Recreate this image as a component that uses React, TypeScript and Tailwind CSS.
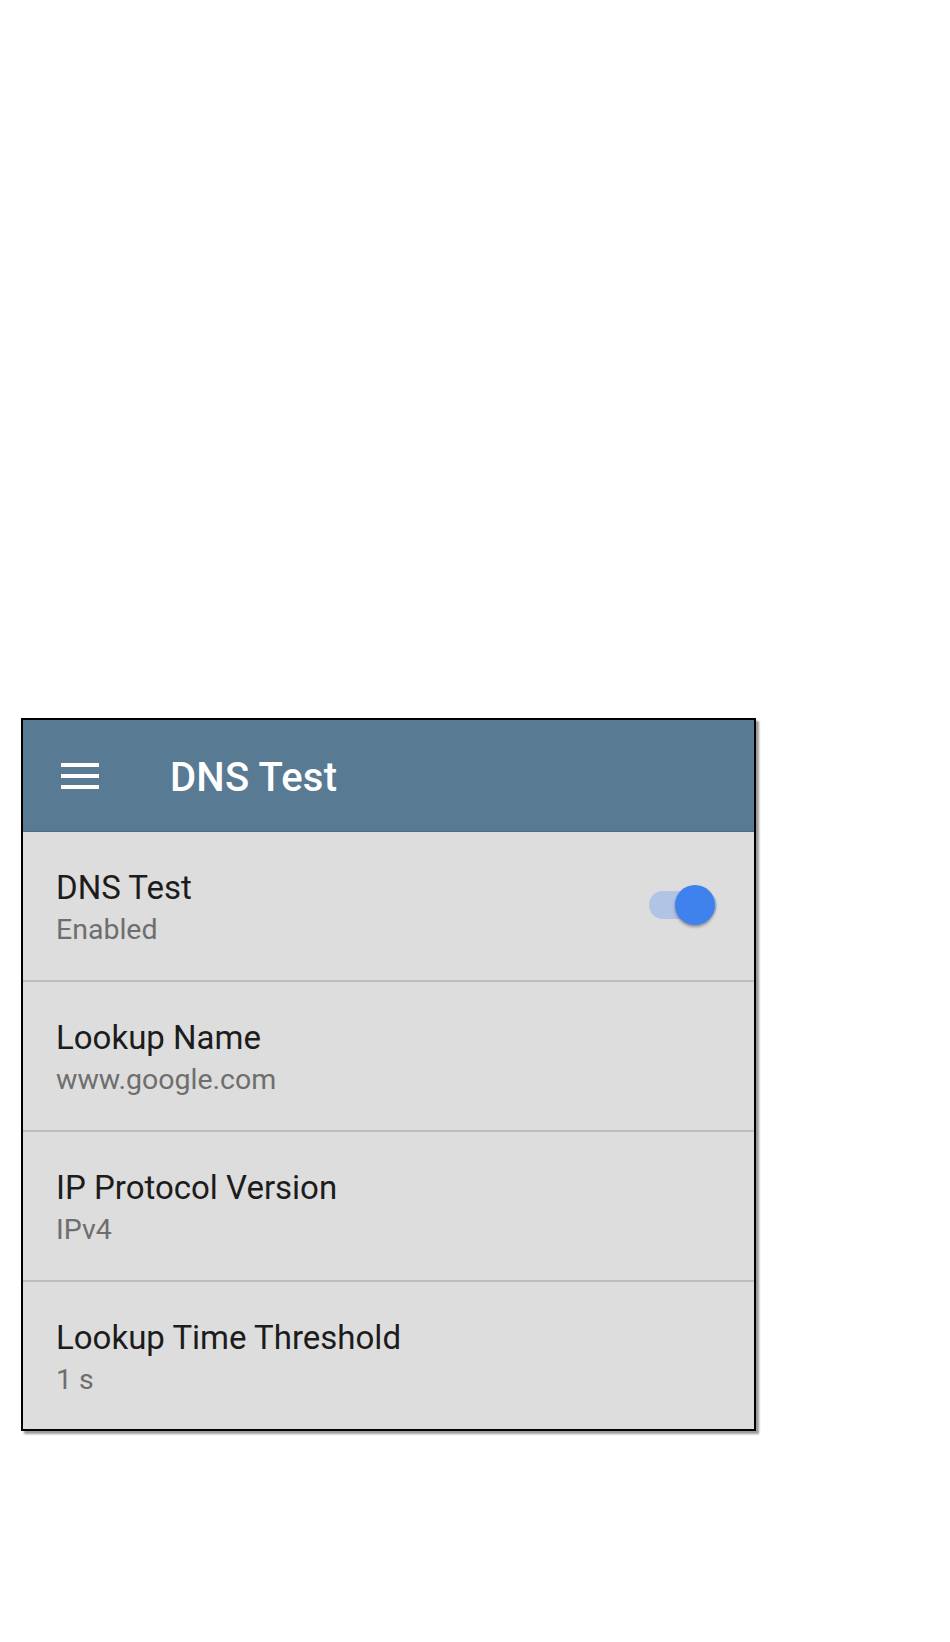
import React from 'react';

const rows = [
  { title: 'DNS Test', value: 'Enabled', toggle: true },
  { title: 'Lookup Name', value: 'www.google.com' },
  { title: 'IP Protocol Version', value: 'IPv4' },
  { title: 'Lookup Time Threshold', value: '1 s' },
];

const Toggle = () => (
  <div className="relative w-[68px] h-[28px] mr-[37px] mt-[-2px]">
    <div className="absolute inset-0 rounded-full bg-[#b0c4e6]" />
    <div className="absolute right-[2px] top-[-6px] w-[40px] h-[40px] rounded-full bg-[#3f82ee] shadow-[0_2px_3px_rgba(0,0,0,0.35)]" />
  </div>
);

export default function App() {
  return (
    <div className="min-h-[1642px] bg-white font-['Roboto','Liberation_Sans',sans-serif] pt-[718px] pl-[21px]">
      <div className="w-[735px] border-2 border-black bg-[#dddddd] shadow-[3px_3px_2px_rgba(0,0,0,0.4)]">
        <div className="h-[112px] bg-[#587a93] border-b border-[#4d6c82] flex items-center">
          <div className="ml-[38px] w-[38px] flex flex-col gap-[7px]">
            <span className="block h-[4px] bg-white" />
            <span className="block h-[4px] bg-white" />
            <span className="block h-[4px] bg-white" />
          </div>
          <h1 className="ml-[71px] pt-[4px] text-[40px] leading-[48px] font-medium text-white tracking-[0.2px]">DNS Test</h1>
        </div>

        {rows.map((row, i) => (
          <div
            key={row.title}
            className={
              i < rows.length - 1
                ? 'h-[150px] border-b-2 border-[#bdbdbd] flex items-start justify-between'
                : 'h-[147px] flex items-start justify-between'
            }
          >
            <div className="pl-[33px] pt-[36px]">
              <div className="text-[33px] leading-[40px] text-[#1c1c1c]">{row.title}</div>
              <div className="mt-[3px] text-[28.5px] leading-[38px] text-[#6e6e6e]">{row.value}</div>
            </div>
            {row.toggle && (
              <div className="self-center">
                <Toggle />
              </div>
            )}
          </div>
        ))}
      </div>
    </div>
  );
}
